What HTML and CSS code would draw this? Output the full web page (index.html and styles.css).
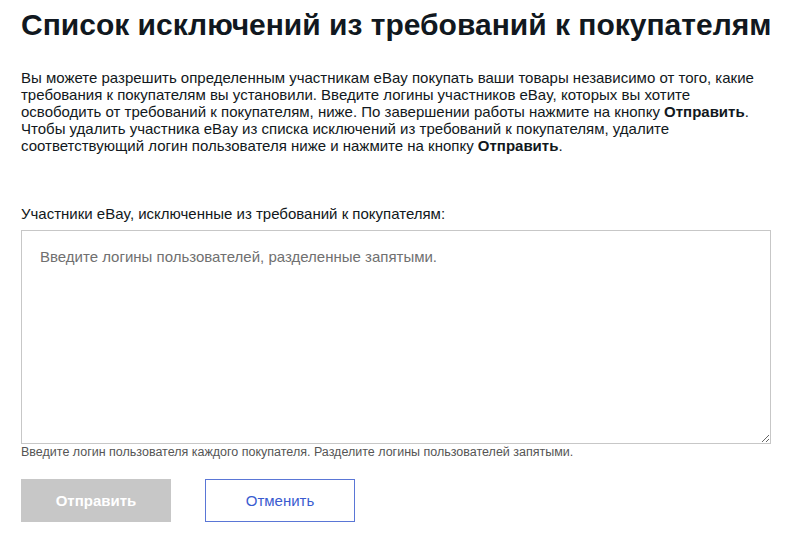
FILE: index.html
```html
<!DOCTYPE html>
<html lang="ru">
<head>
<meta charset="utf-8">
<link rel="stylesheet" href="styles.css">
</head>
<body>
<main class="page">
  <h1 class="title">Список исключений из требований к покупателям</h1>
  <p class="intro">Вы можете разрешить определенным участникам eBay покупать ваши товары независимо от того, какие<br>требования к покупателям вы установили. Введите логины участников eBay, которых вы хотите<br>освободить от требований к покупателям, ниже. По завершении работы нажмите на кнопку <b>Отправить</b>.<br>Чтобы удалить участника eBay из списка исключений из требований к покупателям, удалите<br>соответствующий логин пользователя ниже и нажмите на кнопку <b>Отправить</b>.</p>
  <form class="form">
    <label class="label" for="users">Участники eBay, исключенные из требований к покупателям:</label>
    <textarea class="field" id="users" placeholder="Введите логины пользователей, разделенные запятыми."></textarea>
    <div class="hint">Введите логин пользователя каждого покупателя. Разделите логины пользователей запятыми.</div>
    <div class="actions">
      <button type="button" class="btn btn-primary" disabled>Отправить</button>
      <button type="button" class="btn btn-secondary">Отменить</button>
    </div>
  </form>
</main>
</body>
</html>
```
FILE: styles.css
```css
html, body {
  margin: 0;
  padding: 0;
  background: #fff;
}
body {
  font-family: "Liberation Sans", Arial, sans-serif;
  color: #111820;
}
.page {
  padding: 0 10px 0 21px;
}
.title {
  margin: 0;
  padding-top: 7px;
  font-size: 30px;
  line-height: 36px;
  font-weight: bold;
  white-space: nowrap;
  color: #111820;
}
.intro {
  margin: 26px 0 0 0;
  font-size: 15px;
  line-height: 17px;
  white-space: nowrap;
  color: #111820;
}
.intro b {
  font-weight: bold;
}
.form {
  display: flex;
  flex-direction: column;
  margin-top: 51px;
}
.label {
  font-size: 15px;
  line-height: 17px;
  margin-bottom: 8px;
}
.field {
  box-sizing: border-box;
  width: 750px;
  height: 214px;
  margin: 0;
  padding: 17px 18px;
  border: 1px solid #c7c7c7;
  border-radius: 0;
  font-family: "Liberation Sans", Arial, sans-serif;
  font-size: 15px;
  line-height: 17px;
  color: #111820;
  resize: both;
  outline: none;
}
.field::placeholder {
  color: #707070;
  opacity: 1;
}
.hint {
  margin-top: 1px;
  font-size: 12.5px;
  line-height: 15px;
  color: #555;
}
.actions {
  display: flex;
  gap: 34px;
  margin-top: 19px;
}
.btn {
  box-sizing: border-box;
  width: 150px;
  height: 43px;
  font-family: "Liberation Sans", Arial, sans-serif;
  font-size: 15px;
  border-radius: 0;
  cursor: pointer;
}
.btn-primary {
  background: #c7c7c7;
  border: 1px solid #c7c7c7;
  color: #fff;
  font-weight: bold;
}
.btn-secondary {
  background: #fff;
  border: 1px solid #5a76d6;
  color: #3a5bd0;
}
```
